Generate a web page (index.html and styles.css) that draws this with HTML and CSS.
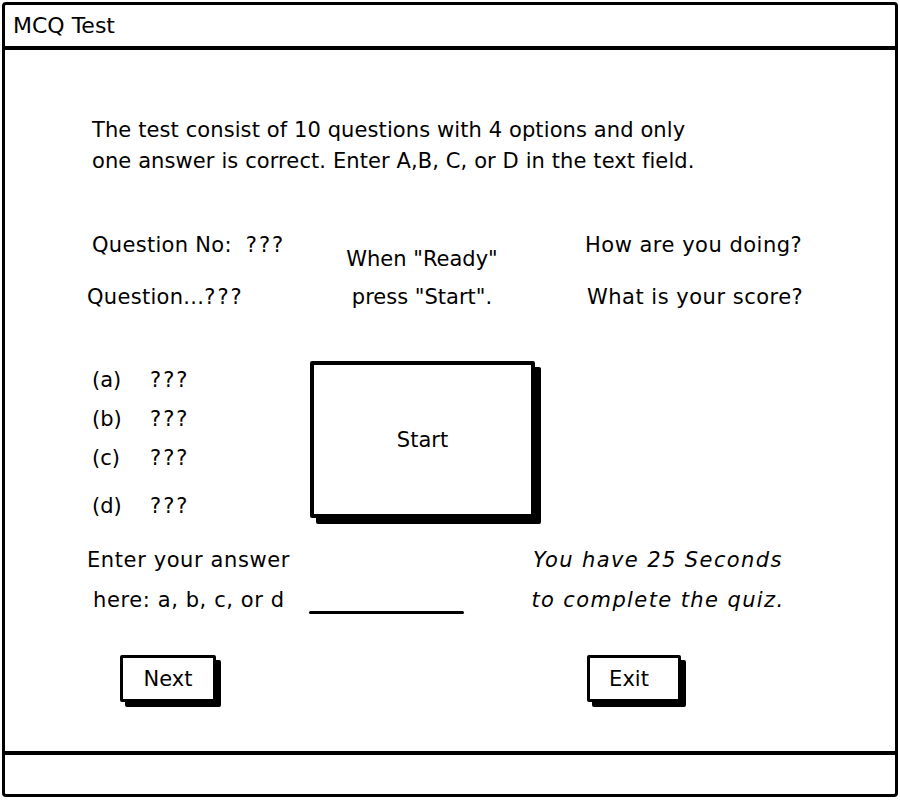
FILE: index.html
```html
<!DOCTYPE html>
<html lang="en">
<head>
<meta charset="utf-8">
<title>MCQ Test</title>
<link rel="stylesheet" href="styles.css">
</head>
<body>
<div class="frame">
  <div class="titlebar">MCQ Test</div>
  <div class="content">
    <p class="intro">The test consist of 10 questions with 4 options and only<br>one answer is correct. Enter A,B, C, or D in the text field.</p>

    <div class="row info">
      <div class="col1">
        <div class="qno">Question No:&nbsp; <span class="q">???</span></div>
        <div class="qtext">Question...<span class="q">???</span></div>
      </div>
      <div class="col2 ready">
        <div class="r1">When "Ready"</div>
        <div class="r2">press "Start".</div>
      </div>
      <div class="col3 status">
        <div class="s1">How are you doing?</div>
        <div class="s2">What is your score?</div>
      </div>
    </div>

    <div class="row quiz">
      <ul class="col1 options">
        <li><span class="lbl">(a)</span><span class="q">???</span></li>
        <li><span class="lbl">(b)</span><span class="q">???</span></li>
        <li><span class="lbl">(c)</span><span class="q">???</span></li>
        <li class="last"><span class="lbl">(d)</span><span class="q">???</span></li>
      </ul>
      <div class="col2">
        <button class="start" type="button">Start</button>
      </div>
    </div>

    <div class="row answer">
      <div class="col1 prompt">
        <div class="p1">Enter your answer</div>
        <div class="p2">here: a, b, c, or d</div>
      </div>
      <div class="col2 field">
        <span class="underline"></span>
      </div>
      <div class="col3 timer">
        <div>You have 25 Seconds</div>
        <div>to complete the quiz.</div>
      </div>
    </div>

    <div class="row buttons">
      <button class="btn next" type="button">Next</button>
      <button class="btn exit" type="button">Exit</button>
    </div>
  </div>
  <div class="statusbar"></div>
</div>
</body>
</html>
```

FILE: styles.css
```css
* { box-sizing: border-box; }
html, body { margin: 0; padding: 0; background: #fff; }
body {
  font-family: "DejaVu Sans", "Liberation Sans", sans-serif;
  color: #000;
}
.frame {
  margin: 2px 0 0 2px;
  width: 896px;
  height: 795px;
  border: 3px solid #000;
  border-radius: 4px;
  display: flex;
  flex-direction: column;
  overflow: hidden;
}
.titlebar {
  height: 45px;
  border-bottom: 4px solid #000;
  padding: 6px 0 0 8px;
  font-size: 22px;
  line-height: 30px;
}
.content {
  flex: 1;
  padding: 65px 0 0 82px;
  font-size: 21px;
}
.intro {
  margin: 0 0 0 5px;
  line-height: 31px;
  letter-spacing: 0.1px;
}
.q { letter-spacing: 2px; }
.row { display: flex; align-items: flex-start; }
.col1 { width: 218px; }
.col2 { width: 234px; }
.col3 { width: 260px; }

.info { margin-top: 53px; line-height: 30px; }
.info .col1 .qno { margin-left: 5px; letter-spacing: 0.3px; }
.info .col1 .qtext { margin-top: 22px; letter-spacing: 0.3px; }
.ready { text-align: center; margin-top: 14px; }
.ready .r2 { margin-top: 8px; }
.status { padding-left: 46px; white-space: nowrap; letter-spacing: 0.5px; }
.status .s2 { margin-top: 22px; padding-left: 2px; }

.quiz { margin-top: 49px; }
.options {
  list-style: none;
  margin: 0;
  padding: 0 0 0 5px;
  line-height: 39px;
}
.options li { display: flex; }
.options .lbl { width: 58px; }
.options li.last { margin-top: 9px; }
.start {
  margin-left: 5px;
  width: 225px;
  height: 157px;
  border: 4px solid #000;
  border-radius: 2px;
  background: #fff;
  box-shadow: 6px 6px 0 #000;
  font: inherit;
  font-size: 21px;
  color: #000;
  padding: 0;
}

.answer { margin-top: 14px; line-height: 40px; white-space: nowrap; }
.prompt { letter-spacing: 0.6px; }
.prompt .p2 { margin-left: 6px; }
.field { display: flex; flex-direction: column; justify-content: flex-end; height: 80px; }
.underline {
  display: block;
  width: 155px;
  height: 3px;
  margin: 0 0 6px 4px;
  background: #000;
  border-radius: 2px;
}
.timer {
  width: 262px;
  margin-left: -12px;
  text-align: center;
  font-style: italic;
  letter-spacing: 1.4px;
}

.buttons { margin-top: 35px; }
.btn {
  height: 47px;
  border: 3px solid #000;
  border-radius: 2px;
  background: #fff;
  box-shadow: 5px 5px 0 #000;
  font: inherit;
  font-size: 21px;
  color: #000;
  padding: 0;
}
.next { width: 96px; margin-left: 33px; }
.exit { width: 94px; margin-left: 371px; padding-right: 10px; }

.statusbar {
  height: 43px;
  border-top: 4px solid #000;
}
```
